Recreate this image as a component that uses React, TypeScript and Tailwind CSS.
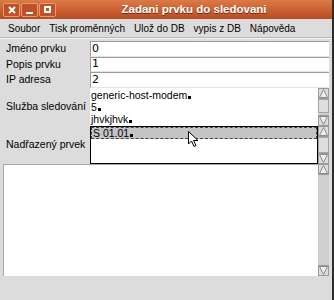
import React from 'react';

const ui = { fontFamily: '"Liberation Sans", Arial, sans-serif' };
const dv = { fontFamily: '"DejaVu Sans", sans-serif' };

function Nl() {
  return <span className="ml-[1px] inline-block h-[3px] w-[3px] bg-black align-baseline" />;
}

function Arrow({ dir }: { dir: 'up' | 'down' }) {
  return (
    <div className="flex h-[11px] w-[11px] items-center justify-center border border-[#9a9a9a] bg-[#dcdcdc]">
      <svg width="9" height="9" viewBox="0 0 9 9">
        {dir === 'up' ? (
          <path d="M4.5 0.5 L8.5 8.5 L0.5 8.5 Z" fill="#eeeeee" stroke="#8a8a8a" strokeWidth="1" />
        ) : (
          <path d="M0.5 0.5 L8.5 0.5 L4.5 8.5 Z" fill="#eeeeee" stroke="#8a8a8a" strokeWidth="1" />
        )}
      </svg>
    </div>
  );
}

function Scrollbar({ thumb }: { thumb?: 'top' | 'full' }) {
  return (
    <div className="flex h-full w-[11px] flex-col bg-[#cfcfcf]">
      <Arrow dir="up" />
      <div className="flex flex-1 flex-col">
        {thumb === 'top' && <div className="h-[14px] border border-[#a4a4a4] bg-[#dedede]" />}
        {thumb === 'full' && <div className="flex-1 border border-[#a4a4a4] bg-[#dedede]" />}
      </div>
      <Arrow dir="down" />
    </div>
  );
}

function Label({ children }: { children: React.ReactNode }) {
  return (
    <div className="flex w-[90px] items-center whitespace-nowrap pl-[6px] text-[10.5px] text-black" style={ui}>
      {children}
    </div>
  );
}

function Field({ label, value, h }: { label: string; value: string; h: string }) {
  return (
    <div className={`flex ${h}`}>
      <Label>{label}</Label>
      <div
        className="flex flex-1 items-center border-t border-l border-[#9c9c9c] border-b border-b-[#e4e4e4] bg-white pl-[1px] text-[11px] text-black"
        style={dv}
      >
        {value}
      </div>
    </div>
  );
}

export default function App() {
  return (
    <div className="relative flex h-[300px] w-[334px] flex-col overflow-hidden border-r-2 border-r-[#2c2c2c] bg-[#dcdcdc]">
      {/* title bar */}
      <div className="relative flex h-[19px] items-center bg-gradient-to-b from-[#dc7a46] to-[#b94a22] px-[3px]">
        <div className="flex gap-[1px]">
          {['x', '_', 'o'].map((k) => (
            <div
              key={k}
              className="flex h-[14px] w-[17px] items-center justify-center rounded-[2px] border border-[#e69a70] bg-[#bf5129]"
            >
              {k === 'x' && (
                <svg width="8" height="8" viewBox="0 0 8 8">
                  <path d="M1 1 L7 7 M7 1 L1 7" stroke="white" strokeWidth="2" />
                </svg>
              )}
              {k === '_' && <div className="mt-[6px] h-[2px] w-[7px] bg-white" />}
              {k === 'o' && <div className="h-[7px] w-[7px] border-2 border-white" />}
            </div>
          ))}
        </div>
        <div
          className="absolute left-0 right-0 top-0 flex h-[19px] items-center justify-center pl-[56px] text-[11.5px] font-bold text-white [text-shadow:0_1px_0_#6a2a10]"
          style={ui}
        >
          Zadani prvku do sledovani
        </div>
      </div>

      {/* menu */}
      <div className="flex h-[19px] items-center gap-[9px] border-b border-b-[#b8b8b8] pl-[8px] text-[10px] text-black" style={ui}>
        <span>Soubor</span>
        <span>Tisk proměnných</span>
        <span>Ulož do DB</span>
        <span>vypis z DB</span>
        <span>Nápověda</span>
      </div>
      <div className="h-[3px] border-t border-t-[#f4f4f4]" />

      <div className="flex flex-col pr-[3px]">
        <Field label="Jméno prvku" value="0" h="h-[16px]" />
        <Field label="Popis prvku" value="1" h="h-[15px]" />
        <Field label="IP adresa" value="2" h="h-[16px]" />

        {/* Služba sledování */}
        <div className="flex h-[38px]">
          <Label>Služba sledování</Label>
          <div className="flex flex-1 bg-white">
            <div className="flex flex-1 flex-col pl-[1px] pt-[1px] text-[10.5px] leading-[12px] text-black" style={ui}>
              <div>
                generic-host-modem
                <Nl />
              </div>
              <div>
                5<Nl />
              </div>
              <div>
                jhvkjhvk
                <Nl />
              </div>
            </div>
            <Scrollbar thumb="top" />
          </div>
        </div>

        {/* Nadřazený prvek */}
        <div className="flex h-[38px]">
          <Label>Nadřazený prvek</Label>
          <div className="flex flex-1">
            <div className="flex flex-1 flex-col border border-black bg-white text-[10.5px] leading-[11px] text-black" style={ui}>
              <div className="h-[12px] border border-dashed border-[#444] bg-[#c4c4c4] pl-[1px]">
                S 01.01
                <Nl />
              </div>
            </div>
            <Scrollbar thumb="full" />
          </div>
        </div>
      </div>

      {/* text area */}
      <div className="flex h-[112px] pl-[3px] pr-[3px]">
        <div className="flex-1 border-l border-t border-[#a8a8a8] bg-white" />
        <Scrollbar />
      </div>

      <div className="flex-1 bg-[#dcdcdc]" />

      {/* mouse pointer */}
      <svg className="absolute left-[188px] top-[131px]" width="12" height="17" viewBox="0 0 12 17">
        <path d="M0.5 0.5 L0.5 13 L3.5 10 L6 15.5 L8 14.5 L5.5 9.5 L10 9.5 Z" fill="white" stroke="black" strokeWidth="1" />
      </svg>
    </div>
  );
}
